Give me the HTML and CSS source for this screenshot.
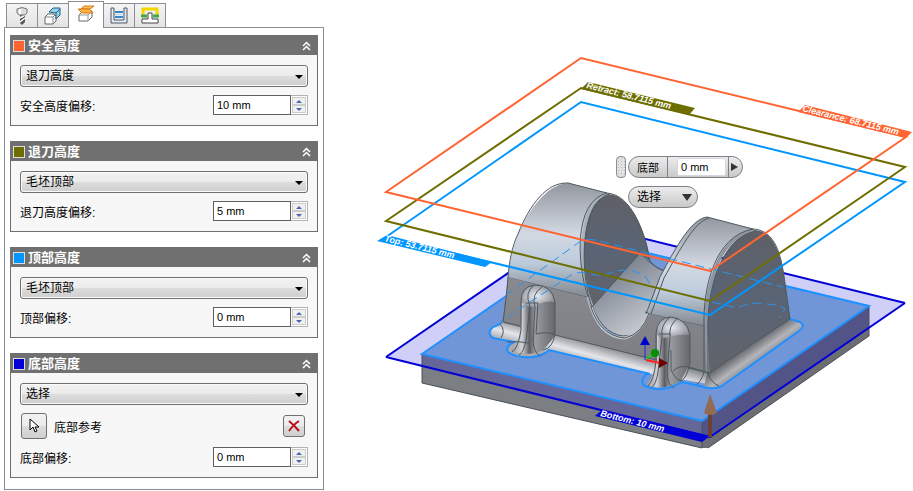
FILE: index.html
```html
<!DOCTYPE html>
<html lang="zh-CN">
<head>
    <meta charset="UTF-8">
    <meta name="viewport" content="width=device-width, initial-scale=1.0">
    <title>高度</title>
    <link rel="stylesheet" href="styles.css">
</head>
<body>
    <div class="layout">
        <aside class="panel">
            <nav class="tabs">
                <button type="button" class="tab" aria-label="刀具">
                    <svg width="20" height="20" viewBox="0 0 20 20">
                        <path d="M8 8h5v8l-3 3-2-2z" fill="#555"/>
                        <path d="M8 12l5-3M8 16l5-4" stroke="#fff" stroke-width="1.5"/>
                        <path d="M5 3q5-3 10 0v4l-2 2H7L5 7z" fill="#ddd" stroke="#777"/>
                        <path d="M8 3v5" stroke="#fff" stroke-width="2"/>
                    </svg>
                </button>
                <button type="button" class="tab" aria-label="几何">
                    <svg width="20" height="20" viewBox="0 0 20 20">
                        <path d="M2 11l3-3h6l2 2v5l-3 3H2z" fill="#fff" stroke="#666"/>
                        <path d="M2 11h8v7M10 11l2-2" fill="none" stroke="#888"/>
                        <path d="M6 6l4-4h7v7l-4 4v-6z" fill="#8fd0ef" stroke="#23617f"/>
                        <path d="M13 7l4-4" stroke="#23617f"/>
                    </svg>
                </button>
                <button type="button" class="tab active" aria-label="高度">
                    <svg width="20" height="20" viewBox="0 0 20 20">
                        <path d="M3 11l4-4h9v6l-4 4H3z" fill="#fff" stroke="#666"/>
                        <path d="M3 11h9v6M12 11l4-4" fill="none" stroke="#999"/>
                        <path d="M5 5l3-3h10l-4 3z" fill="#ffc266" stroke="#d9780f"/>
                        <path d="M2 5h11l4 4H6z" fill="#ffb347" stroke="#d9780f"/>
                    </svg>
                </button>
                <button type="button" class="tab" aria-label="加工路径">
                    <svg width="20" height="20" viewBox="0 0 20 20">
                        <path d="M6 6h8M6 11h8" stroke="#3488c7" stroke-width="2"/>
                        <path d="M6 8h8v1H6z" fill="#b8dcf4"/>
                        <path d="M2 2h3v12h10V2h3v15H2z" fill="#e6e9ee" stroke="#4d5968"/>
                    </svg>
                </button>
                <button type="button" class="tab" aria-label="连接">
                    <svg width="20" height="20" viewBox="0 0 20 20">
                        <path d="M3 9V3h14v6" fill="none" stroke="#f3d600" stroke-width="3"/>
                        <path d="M1 10h6M13 10h6" stroke="#42a548" stroke-width="3"/>
                        <path d="M2 17v-4h6V7h4v6h6v4z" fill="#fff" stroke="#444"/>
                    </svg>
                </button>
            </nav>

            <form class="groups">
                <section class="group">
                    <h2 class="group-title">
                        <span class="swatch clearance"></span>安全高度
                        <button type="button" class="collapse" aria-label="折叠">
                            <svg width="9" height="10" viewBox="0 0 9 10"><path d="M1 5l3.5-3.500L8 5M1 9l3.500-3.500L8 9"/></svg>
                        </button>
                    </h2>
                    <div class="group-body">
                        <div class="select">
                            <select aria-label="安全高度"><option>退刀高度</option></select>
                        </div>
                        <div class="row">
                            <label for="clearanceOffset">安全高度偏移:</label>
                            <span class="spinner">
                                <input type="text" id="clearanceOffset" value="10 mm">
                                <span class="steps">
                                    <button type="button" class="up" aria-label="增加"></button>
                                    <button type="button" class="down" aria-label="减少"></button>
                                </span>
                            </span>
                        </div>
                    </div>
                </section>

                <section class="group">
                    <h2 class="group-title">
                        <span class="swatch retract"></span>退刀高度
                        <button type="button" class="collapse" aria-label="折叠">
                            <svg width="9" height="10" viewBox="0 0 9 10"><path d="M1 5l3.500-3.500L8 5M1 9l3.500-3.500L8 9"/></svg>
                        </button>
                    </h2>
                    <div class="group-body">
                        <div class="select">
                            <select aria-label="退刀高度"><option>毛坯顶部</option></select>
                        </div>
                        <div class="row">
                            <label for="retractOffset">退刀高度偏移:</label>
                            <span class="spinner">
                                <input type="text" id="retractOffset" value="5 mm">
                                <span class="steps">
                                    <button type="button" class="up" aria-label="增加"></button>
                                    <button type="button" class="down" aria-label="减少"></button>
                                </span>
                            </span>
                        </div>
                    </div>
                </section>

                <section class="group">
                    <h2 class="group-title">
                        <span class="swatch top"></span>顶部高度
                        <button type="button" class="collapse" aria-label="折叠">
                            <svg width="9" height="10" viewBox="0 0 9 10"><path d="M1 5l3.500-3.500L8 5M1 9l3.500-3.500L8 9"/></svg>
                        </button>
                    </h2>
                    <div class="group-body">
                        <div class="select">
                            <select aria-label="顶部高度"><option>毛坯顶部</option></select>
                        </div>
                        <div class="row">
                            <label for="topOffset">顶部偏移:</label>
                            <span class="spinner">
                                <input type="text" id="topOffset" value="0 mm">
                                <span class="steps">
                                    <button type="button" class="up" aria-label="增加"></button>
                                    <button type="button" class="down" aria-label="减少"></button>
                                </span>
                            </span>
                        </div>
                    </div>
                </section>

                <section class="group">
                    <h2 class="group-title">
                        <span class="swatch bottom"></span>底部高度
                        <button type="button" class="collapse" aria-label="折叠">
                            <svg width="9" height="10" viewBox="0 0 9 10"><path d="M1 5l3.500-3.500L8 5M1 9l3.500-3.500L8 9"/></svg>
                        </button>
                    </h2>
                    <div class="group-body">
                        <div class="select">
                            <select aria-label="底部高度"><option>选择</option></select>
                        </div>
                        <div class="row reference">
                            <button type="button" class="pick" id="pickBottom" aria-label="选择底部参考">
                                <svg width="12" height="16" viewBox="0 0 12 16"><path d="M2 1v11l3-3 2 5 2-1-2-4h4z" fill="#fff" stroke="#000"/></svg>
                            </button>
                            <label for="pickBottom">底部参考</label>
                            <button type="button" class="pick clear" aria-label="清除">
                                <svg width="12" height="12" viewBox="0 0 12 12"><path d="M1 1q5 4 10 10M11 1Q6 4 1 11" fill="none" stroke="#b5121b" stroke-width="2"/></svg>
                            </button>
                        </div>
                        <div class="row">
                            <label for="bottomOffset">底部偏移:</label>
                            <span class="spinner">
                                <input type="text" id="bottomOffset" value="0 mm">
                                <span class="steps">
                                    <button type="button" class="up" aria-label="增加"></button>
                                    <button type="button" class="down" aria-label="减少"></button>
                                </span>
                            </span>
                        </div>
                    </div>
                </section>
            </form>
        </aside>

        <main class="viewer">
            <svg class="scene" viewBox="324 0 589 491">
                <defs>
                    <linearGradient id="band" x1="0" y1="0" x2="0" y2="1">
                        <stop offset="0" stop-color="#92979f"/>
                        <stop offset="0.45" stop-color="#d3d9e3"/>
                        <stop offset="0.7" stop-color="#bccbdc"/>
                        <stop offset="1" stop-color="#85888e"/>
                    </linearGradient>
                    <linearGradient id="inner" x1="0" y1="0" x2="0" y2="1">
                        <stop offset="0" stop-color="#5f6066"/>
                        <stop offset="0.5" stop-color="#596475"/>
                        <stop offset="1" stop-color="#626369"/>
                    </linearGradient>
                    <linearGradient id="saddle" x1="0" y1="0" x2="0.6" y2="1">
                        <stop offset="0" stop-color="#596270"/>
                        <stop offset="0.5" stop-color="#9299a4"/>
                        <stop offset="1" stop-color="#c8cbd1"/>
                    </linearGradient>
                    <linearGradient id="front" x1="0" y1="0" x2="0" y2="1">
                        <stop offset="0" stop-color="#888a90"/>
                        <stop offset="1" stop-color="#7b7d83"/>
                    </linearGradient>
                    <linearGradient id="filletFront" gradientUnits="userSpaceOnUse" x1="632" y1="352" x2="626" y2="374">
                        <stop offset="0" stop-color="#808288"/>
                        <stop offset="0.6" stop-color="#e4e6eb"/>
                        <stop offset="1" stop-color="#a9aab0"/>
                    </linearGradient>
                    <linearGradient id="filletSide" gradientUnits="userSpaceOnUse" x1="748" y1="345" x2="760" y2="362">
                        <stop offset="0" stop-color="#606167"/>
                        <stop offset="0.6" stop-color="#b4b5ba"/>
                        <stop offset="1" stop-color="#8a8b91"/>
                    </linearGradient>
                    <linearGradient id="boss" x1="0" y1="0" x2="1" y2="0">
                        <stop offset="0" stop-color="#96989e"/>
                        <stop offset="0.25" stop-color="#d0d2d7"/>
                        <stop offset="0.42" stop-color="#5c5e64"/>
                        <stop offset="0.55" stop-color="#9a9ca2"/>
                        <stop offset="1" stop-color="#65676d"/>
                    </linearGradient>
                    <radialGradient id="bossCap" cx="0.45" cy="0.5" r="0.6">
                        <stop offset="0" stop-color="#e9edf3"/>
                        <stop offset="1" stop-color="#85888f"/>
                    </radialGradient>
                </defs>

                <!-- bottom plane -->
                <path d="M386 357L581 223 905 303 710 437z" fill="#cfcff8"/>
                <path d="M386 357L581 223 905 303" fill="none" stroke="#0000d7" stroke-width="2"/>

                <!-- stock plate -->
                <path d="M422 354L702 421V448L422 383z" fill="#7b7e83"/>
                <path d="M422 354L702 421V435L422 366z" fill="#666799"/>
                <path d="M702 421L869 306V336L708 448H702z" fill="#6c6e74"/>
                <path d="M702 421L869 306V328L710 437 702 435z" fill="#525488"/>
                <path d="M422 354L589 239 869 306 702 421z" fill="#7196d8" stroke="#1e90ff" stroke-width="2"/>
                <path d="M422 355V383L702 448V422M869 307V336L708 448" fill="none" stroke="#4a4f58"/>

                <!-- feet and fillets -->
                <path d="M503 320Q501 325 493 327 486 333 493 338L514 342Q505 346 508 352 516 358 532 357 543 356 549 350L650 374 720 386V372L555 335z" fill="url(#filletFront)"/>
                <path d="M708 370L788 317Q792 322 800 322 806 326 799 331L722 386Q714 390 704 387z" fill="url(#filletSide)"/>
                <path d="M503 320Q501 325 493 327 486 333 493 338L514 342Q505 346 508 352 516 358 532 357 543 356 549 350L650 374M704 387Q714 390 722 386L799 331Q806 326 800 322L790 319" fill="none" stroke="#1e90ff" stroke-width="2"/>

                <!-- saddle and front face -->
                <path d="M590 300L640 253Q656 270 666 271L652 313Q641 337 623 336 600 333 590 300z" fill="url(#saddle)" stroke="#4c595f"/>
                <path d="M508 277L588 297Q598 338 625 338 641 333 648 313L705 326 709 373 555 335 502 323z" fill="url(#front)"/>
                <path d="M588 297Q598 338 625 338 641 333 648 313" fill="none" stroke="#c3c8cf" stroke-width="3"/>
                <path d="M588 297Q597 336 625 338 642 334 649 313M509 277L588 297M645 312L705 326M555 335L709 373" fill="none" stroke="#4c595f"/>

                <!-- left ear -->
                <path d="M568 183C545 184 524 217 516 240 510 258 509 268 508 277L588 297C577 252 580 205 607 193z" fill="url(#band)"/>
                <path d="M607 194C630 193 648 235 650 261L640 253 592 307C580 278 575 204 607 194z" fill="url(#inner)"/>
                <path d="M607 194C577 200 578 276 592 306" fill="none" stroke="#a9b0ba" stroke-width="3"/>
                <path d="M503 322C505 307 507 293 508 277 509 263 512 246 518 234 530 204 547 182 568 183L607 193C632 195 644 231 650 261Q656 269 666 271M607 193C573 202 577 264 588 297M609 194C579 204 580 276 592 307L640 253" fill="none" stroke="#4c595f"/>

                <!-- right ear -->
                <path d="M707 217C692 219 678 243 660 277L648 313 705 326C704 289 716 240 753 229z" fill="url(#band)"/>
                <path d="M754 230C774 230 781 256 784 276L790 319 709 372C703 325 708 244 754 230z" fill="url(#inner)"/>
                <path d="M754 230C718 238 706 285 706 324L708 372" fill="none" stroke="#8e959f" stroke-width="3"/>
                <path d="M707 217C692 219 678 243 660 277L646 314M709 218C694 222 681 248 664 278L651 314M707 217L753 229C776 230 781 257 784 276L790 319 709 373M753 229C715 236 703 286 704 326L704 371M756 231C720 238 708 290 708 326V373" fill="none" stroke="#4c595f"/>

                <!-- left boss -->
                <path d="M522 299Q522 287 533 285 553 284 555 302V334Q553 340 543 350 530 357 511 351 518 344 521 328z" fill="url(#boss)"/>
                <path d="M521 302Q521 286 535 285 552 285 555 302 542 300 536 307H530Z" fill="url(#bossCap)"/>
                <path d="M521 302Q521 286 535 285 552 285 555 302V334Q553 348 543 350M521 302V330Q518 349 512 352M534 285Q524 293 530 306L526 340Q524 352 519 355M542 287Q531 294 535 307L533 341Q534 353 540 356M526 303H538L536 334Q549 331 555 335M504 322L520 326M500 324Q506 330 501 338M507 342Q519 341 529 343" fill="none" stroke="#4c595f"/>

                <!-- right boss -->
                <path d="M657 329Q658 317 670 317 688 319 690 335V363L681 381Q663 392 646 385 655 375 657 360z" fill="url(#boss)"/>
                <path d="M656 334Q657 317 671 317 687 319 690 335 675 334 670 338H661z" fill="url(#bossCap)"/>
                <path d="M656 334Q657 317 671 317 687 319 690 335V363Q687 378 681 381M656 334V361Q654 380 648 386M670 317Q660 325 662 337L658 372Q656 385 651 388M678 318Q668 325 670 338L667 373Q668 386 674 388M659 334H671M673 371Q679 365 689 367L709 373M671 350V370Q676 380 681 381M704 372Q701 382 696 385M708 373Q710 382 719 386" fill="none" stroke="#4c595f"/>
                <path d="M648 373Q638 381 645 386 662 394 682 382L704 387" fill="none" stroke="#1e90ff" stroke-width="2"/>

                <!-- hidden edges -->
                <path d="M506 295L578 243Q585 238 595 240L783 287M506 318L568 277Q576 271 588 273 602 278 612 272 630 267 645 276L650 284M712 302L738 308Q750 301 764 304 778 304 785 309L779 318" fill="none" stroke="#2b93ec" stroke-dasharray="9 5"/>

                <!-- height planes -->
                <path d="M386 357L710 437 905 303" fill="none" stroke="#0000d7" stroke-width="2"/>
                <path d="M386 237L581 102 905 182 710 315z" fill="none" stroke="#0096ff" stroke-width="2"/>
                <path d="M386 221L581 88 905 167 710 301z" fill="none" stroke="#6e6e00" stroke-width="2"/>
                <path d="M386 192L581 58 906 137 710 271z" fill="none" stroke="#ff6432" stroke-width="2"/>

                <path d="M798 112L805 105 912 132 906 138z" fill="#ff6432"/>
                <path d="M581 89L588 82 695 108 689 115z" fill="#6e6e00"/>
                <path d="M377 241L387 235 492 262 485 267z" fill="#0096ff"/>
                <path d="M595 416L602 410 710 436 702 442z" fill="#0000d7"/>
                <g class="plane-label">
                    <text transform="translate(802 111) rotate(14)">Clearance: 68.7115 mm</text>
                    <text transform="translate(586 88) rotate(14)">Retract: 58.7115 mm</text>
                    <text transform="translate(384 241) rotate(14)">Top: 53.7115 mm</text>
                    <text transform="translate(600 416) rotate(14)">Bottom: 10 mm</text>
                </g>

                <!-- origin triad -->
                <path d="M645 344V360" stroke="#2424d8"/>
                <path d="M645 336L650 345H640z" fill="#0000cd"/>
                <path d="M646 359L653 354" stroke="#12d012" stroke-width="2"/>
                <circle cx="655" cy="353" r="4" fill="#078f07"/>
                <path d="M646 360L660 363" stroke="#ff2020" stroke-width="2"/>
                <path d="M659 358L668 363 659 368z" fill="#6d0000"/>

                <path d="M710 412V437" stroke="#6b3f33" stroke-width="4"/>
                <path d="M710 394L717 413Q710 417 704 413z" fill="#936a52"/>
            </svg>

            <div class="mini-toolbar">
                <span class="grip"></span>
                <div class="mini-controls">
                    <div class="pill">
                        <label for="miniOffset">底部</label>
                        <span class="mini-field"><input type="text" id="miniOffset" value="0 mm"></span>
                        <button type="button" aria-label="更多"></button>
                    </div>
                    <div class="mini-select">
                        <select aria-label="底部"><option>选择</option></select>
                    </div>
                </div>
            </div>
        </main>
    </div>
</body>
</html>
```
FILE: styles.css
```css
* {
    box-sizing: border-box;
}
body {
    margin: 0;
    background: #fff;
    color: #000;
    font-family: "Liberation Sans", "Noto Sans CJK SC", sans-serif;
    font-size: 12px;
}
button, input, select {
    margin: 0;
    padding: 0;
    font: inherit;
    color: inherit;
}
.layout {
    display: grid;
    grid-template-columns: 320px minmax(0, 1fr);
    padding-left: 4px;
}
.panel {
    padding-top: 1px;
}

/* tabs */
.tabs {
    display: flex;
    align-items: flex-end;
    padding-left: 2px;
}
.tab {
    display: flex;
    align-items: center;
    justify-content: center;
    width: 32px;
    height: 24px;
    margin-right: -1px;
    border: 1px solid #8c8e96;
    border-bottom: none;
    background: linear-gradient(#f4f4f4, #e4e4e4);
}
.tab.active {
    z-index: 1;
    width: 36px;
    height: 27px;
    margin-bottom: -1px;
    padding-bottom: 3px;
    background: #fff;
}

/* groups */
.groups {
    display: flex;
    flex-direction: column;
    gap: 15px;
    padding: 7px 5px 11px;
    border: 1px solid #8c8e96;
}
.group {
    border: 1px solid #707070;
    background: #f7f7f7;
}
.group-title {
    display: flex;
    align-items: center;
    gap: 3px;
    height: 19px;
    margin: 0;
    padding: 0 6px 0 2px;
    background: #707070;
    color: #fff;
    font-size: 13px;
    line-height: 18px;
}
.swatch {
    width: 12px;
    height: 12px;
    border: 1px solid #ddd;
}
.clearance {
    background: #ff6432;
}
.retract {
    background: #6e6e00;
}
.top {
    background: #0096ff;
}
.bottom {
    background: #0000d7;
}
.collapse {
    display: flex;
    margin-left: auto;
    border: none;
    background: none;
}
.collapse path {
    fill: none;
    stroke: #fff;
    stroke-width: 1.5;
}
.group-body {
    display: flex;
    flex-direction: column;
    gap: 8px;
    padding: 10px 9px;
}
.select {
    position: relative;
}
.select select {
    display: block;
    width: 100%;
    height: 22px;
    padding-left: 5px;
    border: 1px solid #707070;
    border-radius: 3px;
    background: linear-gradient(#f2f2f2 0%, #ebebeb 48%, #dcdcdc 52%, #cfcfcf 100%);
    box-shadow: inset 0 0 0 1px #fafafa;
    appearance: none;
}
.select::after {
    content: "";
    position: absolute;
    top: 10px;
    right: 5px;
    border: 4px solid transparent;
    border-top-color: #000;
    border-bottom: none;
    pointer-events: none;
}
.row {
    display: flex;
    align-items: center;
    justify-content: space-between;
    height: 20px;
}
.spinner {
    display: flex;
    height: 20px;
    font-size: 11px;
}
.spinner input {
    width: 78px;
    padding-left: 3px;
    border: 1px solid #606060;
    background: #fff;
}
.steps {
    display: flex;
    flex-direction: column;
    width: 17px;
    padding: 1px;
    border: 1px solid #b4b4b4;
    border-left: none;
    background: #fff;
}
.steps button {
    display: flex;
    flex: 1;
    align-items: center;
    justify-content: center;
    border: 1px solid #ccc;
    background: #f0f0f0;
}
.steps button::before {
    content: "";
    border: 3px solid transparent;
}
.steps .up::before {
    border-top: none;
    border-bottom-color: #4a63b5;
}
.steps .down::before {
    border-bottom: none;
    border-top-color: #4a63b5;
}
.reference {
    gap: 7px;
    height: 26px;
    padding: 0 3px 0 1px;
}
.pick {
    display: flex;
    align-items: center;
    justify-content: center;
    width: 26px;
    height: 26px;
    border: 1px solid #707070;
    border-radius: 3px;
    background: linear-gradient(#f2f2f2 0%, #ebebeb 48%, #dcdcdc 52%, #cfcfcf 100%);
}
.pick.clear {
    width: 22px;
    height: 22px;
    margin-left: auto;
}

/* viewer */
.viewer {
    position: relative;
}
.scene {
    display: block;
    width: 100%;
}
.plane-label {
    fill: #fff;
    font-size: 9px;
    font-style: italic;
    font-weight: bold;
}
.mini-toolbar {
    position: absolute;
    top: 156px;
    left: 292px;
    display: flex;
    gap: 2px;
}
.grip {
    width: 10px;
    height: 22px;
    border: 1px solid #8a8f96;
    border-radius: 4px;
    background: radial-gradient(#bbb 1px, #e2e2e2 1px) 0 0 / 3px 3px;
}
.mini-controls {
    display: flex;
    flex-direction: column;
    align-items: flex-start;
    gap: 8px;
}
.pill {
    display: flex;
    align-items: center;
    height: 22px;
    overflow: hidden;
    border: 1px solid #7c8188;
    border-radius: 11px;
    background: linear-gradient(#ececec, #c9c9c9);
}
.pill label {
    padding: 0 8px;
    font-size: 11px;
}
.mini-field {
    display: flex;
    align-items: center;
    height: 22px;
    padding: 0 2px 0 9px;
    border: 1px solid #7c8188;
    border-width: 0 1px;
}
.mini-field input {
    width: 49px;
    height: 18px;
    padding-left: 3px;
    border: 1px solid #d5d8e0;
    border-radius: 2px;
    background: #fff;
    font-size: 11px;
}
.pill button {
    width: 13px;
    height: 20px;
    padding-left: 2px;
    border: none;
    background: none;
}
.pill button::before {
    content: "";
    display: block;
    width: 0;
    border: 4px solid transparent;
    border-left: 7px solid #333;
    border-right: none;
}
.mini-select {
    position: relative;
}
.mini-select select {
    display: block;
    width: 70px;
    height: 22px;
    padding-left: 8px;
    border: 1px solid #7c8188;
    border-radius: 11px;
    background: linear-gradient(#ececec, #c9c9c9);
    font-size: 12px;
    appearance: none;
}
.mini-select::after {
    content: "";
    position: absolute;
    top: 8px;
    right: 6px;
    border: 5px solid transparent;
    border-top: 7px solid #333;
    border-bottom: none;
    pointer-events: none;
}
```
